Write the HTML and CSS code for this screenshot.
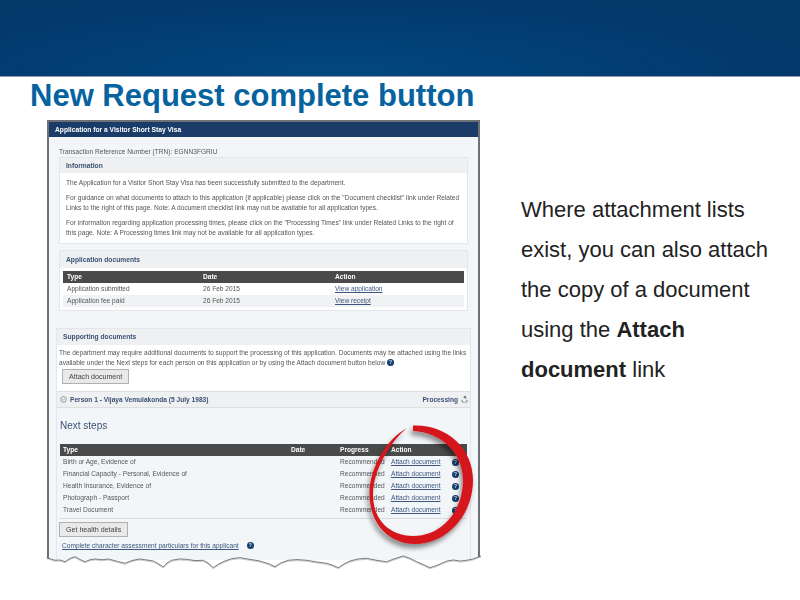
FILE: index.html
```html
<!DOCTYPE html>
<html lang="en">
<head>
<meta charset="utf-8">
<title>New Request complete button</title>
<link rel="stylesheet" href="styles.css">
</head>
<body>
<div class="slide">
  <header class="banner"></header>
  <h1 class="title">New Request complete button</h1>
  <div class="content">
    <div class="shot">
      <div class="panel">
        <div class="panel-title">Application for a Visitor Short Stay Visa</div>
        <div class="panel-body">
          <p class="trn">Transaction Reference Number (TRN): EGNN3FGRIU</p>
          <section class="box info">
            <h2 class="box-head">Information</h2>
            <div class="info-text">
              <p>The Application for a Visitor Short Stay Visa has been successfully submitted to the department.</p>
              <p>For guidance on what documents to attach to this application (if applicable) please click on the "Document checklist" link under Related<br>Links to the right of this page. Note: A document checklist link may not be available for all application types.</p>
              <p>For information regarding application processing times, please click on the "Processing Times" link under Related Links to the right of<br>this page. Note: A Processing times link may not be available for all application types.</p>
            </div>
          </section>
          <section class="box docs">
            <h2 class="box-head">Application documents</h2>
            <div class="table-wrap">
              <div class="row thead docs-row"><span>Type</span><span>Date</span><span>Action</span></div>
              <div class="row docs-row"><span>Application submitted</span><span>26 Feb 2015</span><a>View application</a></div>
              <div class="row alt docs-row"><span>Application fee paid</span><span>26 Feb 2015</span><a>View receipt</a></div>
            </div>
          </section>
        </div>
        <section class="support">
          <h2 class="box-head support-head">Supporting documents</h2>
          <div class="support-text">
            <p>The department may require additional documents to support the processing of this application. Documents may be attached using the links<br>available under the Next steps for each person on this application or by using the Attach document button below <i class="q">?</i></p>
            <span class="btn">Attach document</span>
          </div>
          <div class="person">
            <span class="person-name"><svg class="chev" viewBox="0 0 8 8"><circle cx="4" cy="4" r="3.3" fill="none" stroke="#777" stroke-width=".8"/><path d="M2.4 3.2 4 4.6 5.6 3.2" fill="none" stroke="#777" stroke-width=".8"/></svg>Person 1 - Vijaya Vemulakonda (5 July 1983)</span>
            <span class="person-state">Processing <svg class="proc" viewBox="0 0 8 8"><path d="M1.2 4.4a2.9 2.9 0 1 0 5.6 0M3.2 .6h2.2v2.6M5.4 1.8H3" fill="none" stroke="#555" stroke-width=".9"/></svg></span>
          </div>
          <div class="steps">
            <h3 class="steps-head">Next steps</h3>
            <div class="steps-table">
              <div class="row thead step-row"><span>Type</span><span>Date</span><span>Progress</span><span>Action</span><span></span></div>
              <div class="row step-row"><span>Birth or Age, Evidence of</span><span></span><span>Recommended</span><a>Attach document</a><i class="q">?</i></div>
              <div class="row step-row"><span>Financial Capacity - Personal, Evidence of</span><span></span><span>Recommended</span><a>Attach document</a><i class="q">?</i></div>
              <div class="row step-row"><span>Health Insurance, Evidence of</span><span></span><span>Recommended</span><a>Attach document</a><i class="q">?</i></div>
              <div class="row step-row"><span>Photograph - Passport</span><span></span><span>Recommended</span><a>Attach document</a><i class="q">?</i></div>
              <div class="row step-row"><span>Travel Document</span><span></span><span>Recommended</span><a>Attach document</a><i class="q">?</i></div>
            </div>
            <span class="btn health">Get health details</span>
            <p class="char"><a>Complete character assessment particulars for this applicant</a><i class="q">?</i></p>
          </div>
        </section>
      </div>
      <svg class="overlay" viewBox="33 120 460 460" aria-hidden="true">
        <defs>
          <filter id="ringShadow" x="-20%" y="-20%" width="140%" height="140%">
            <feDropShadow dx="-2" dy="4" stdDeviation="2.5" flood-color="#000" flood-opacity=".45"/>
          </filter>
          <filter id="tearShadow" x="-5%" y="-100%" width="110%" height="300%">
            <feDropShadow dx="0" dy="1" stdDeviation=".6" flood-color="#000" flood-opacity=".3"/>
          </filter>
        </defs>
        <path class="tear-fill" d="M46.700 557.700 L55 560.300 60 560 65 561.700 70 558.500 75 556.700 80 559.500 85 561.700 90 559.800 95 559 102 559.800 108.300 559 116 561 125 563.300 132 560.500 140 559 147 560 153.300 561 158 563.500 163.300 567 167 563 171.700 560.300 179 559 186.700 559.300 195 560.600 203.300 560.300 208 563 213.300 567.700 219 563.800 225 561 232 558.600 240 557.700 250 559.400 260 561 268 563.500 275 566.700 281 562.800 288.300 560.300 297 559.600 306.700 560.300 317 562 326.700 563.300 332 565 338.300 567.700 344 564 350 561 358 559 366.700 558.300 377 560.400 386.700 561.700 395 558.600 403.300 556 410 558.400 416.700 561.700 423 564.500 430 567.700 436 565.800 441.700 563.300 447 561 453.300 560 460 561 466.700 560.300 473 559 481 556 V580 H46.700 Z"/>
        <path class="tear" filter="url(#tearShadow)" d="M46.700 557.700 L55 560.300 60 560 65 561.700 70 558.500 75 556.700 80 559.500 85 561.700 90 559.800 95 559 102 559.800 108.300 559 116 561 125 563.300 132 560.500 140 559 147 560 153.300 561 158 563.500 163.300 567 167 563 171.700 560.300 179 559 186.700 559.300 195 560.600 203.300 560.300 208 563 213.300 567.700 219 563.800 225 561 232 558.600 240 557.700 250 559.400 260 561 268 563.500 275 566.700 281 562.800 288.300 560.300 297 559.600 306.700 560.300 317 562 326.700 563.300 332 565 338.300 567.700 344 564 350 561 358 559 366.700 558.300 377 560.400 386.700 561.700 395 558.600 403.300 556 410 558.400 416.700 561.700 423 564.500 430 567.700 436 565.800 441.700 563.300 447 561 453.300 560 460 561 466.700 560.300 473 559 481 556"/>
        <path class="ring" filter="url(#ringShadow)" d="M413 425.500 C445 424 473 447 473 480 C473 515 447 544 415 544 C390 544 370 525 369.500 495 C369 470 385 440 407 428 C390 442 373 470 373 495 C373 520 390 536 413 536 C443 536 463 510 463 480 C463 452 440 432 413 431 Z"/>
      </svg>
    </div>
    <div class="side">
      <p>Where attachment lists<br>exist, you can also attach<br>the copy of a document<br>using the <b>Attach</b><br><b>document</b> link</p>
    </div>
  </div>
</div>
</body>
</html>
```
FILE: styles.css
```css
* { box-sizing: border-box; margin: 0; padding: 0; }
html, body { width: 800px; height: 600px; overflow: hidden; background: #fff; }
body { font-family: "Liberation Sans", Arial, sans-serif; }

.slide { width: 800px; height: 600px; display: flex; flex-direction: column; }
.banner {
  height: 77px;
  flex: none;
  border-bottom: 1px solid #8d99aa;
  background: radial-gradient(ellipse 60% 110% at 42% 100%, #02487f 0%, #023e73 60%, #03386b 100%);
}
.title {
  height: 37px;
  flex: none;
  padding-left: 30px;
  font-size: 31px;
  line-height: 37px;
  font-weight: 700;
  color: #06639f;
}
.content { display: flex; flex: 1; min-height: 0; }

.shot { position: relative; width: 460px; margin: 6px 0 0 33px; flex: none; height: 460px; }
.overlay { position: absolute; left: 0; top: 0; width: 460px; height: 460px; filter: blur(.35px); }
.tear-fill { fill: #fff; }
.tear { fill: none; stroke: #444; stroke-width: .7; stroke-linejoin: round; }
.ring { fill: #d5141b; }

.panel {
  margin-left: 14px;
  width: 433px;
  height: 440px;
  border: 2px solid #6d7074;
  border-bottom: 0;
  background: #f3f6f9;
  font-size: 6.6px;
  line-height: 10px;
  color: #555;
  white-space: nowrap;
  filter: blur(.55px);
  overflow: hidden;
}
.panel-title {
  height: 15px;
  background: #1b3b69;
  color: #fff;
  font-weight: 700;
  font-size: 6.7px;
  line-height: 15px;
  padding-left: 6px;
}
.panel-body { padding: 10px 10px 0; }
.trn { height: 11px; line-height: 10px; font-size: 6.6px; }
.box { background: #fff; border: 1px solid #e4e6e9; }
.box-head {
  height: 15px;
  padding-left: 6px;
  background: #eff0f1;
  color: #3a5174;
  font-size: 6.7px;
  line-height: 15px;
  font-weight: 700;
}
.info { height: 87px; margin-top: -1px; }
.info-text { padding: 5px 6px; }
.info-text p { margin-bottom: 5px; }
.docs { height: 61px; margin: 6px 0 0; }
.docs .box-head { height: 17px; line-height: 17px; }
.table-wrap { padding: 3px 3px 0; }

.row { display: grid; height: 12px; line-height: 12px; align-items: center; }
.thead { background: #4a4a4a; color: #fff; font-weight: 700; }
.alt { background: #f0f2f4; }
.row a, .char a { color: #3c5680; text-decoration: underline; }
.docs-row { grid-template-columns: 136px 132px 1fr; padding-left: 4px; }

.support {
  margin: 17px 7px 0;
  border: 1px solid #e4e6e9;
  border-bottom: 0;
  height: 240px;
}
.support-head { height: 16px; line-height: 16px; }
.support-text { background: #fff; height: 46px; padding: 3px 2px 0; }
.support-text p { line-height: 9.5px; height: 19px; }
.q {
  display: inline-block;
  width: 7px;
  height: 7px;
  border-radius: 50%;
  background: #153f6f;
  color: #cfe0ee;
  font-size: 5px;
  line-height: 7px;
  font-style: normal;
  font-weight: 700;
  text-align: center;
  vertical-align: middle;
}
.btn {
  display: inline-block;
  margin: 2px 0 0 3px;
  height: 15px;
  padding: 0 6px;
  border: 1px solid #aeb0b2;
  background: #e9e9e9;
  font-size: 7.1px;
  line-height: 15px;
  color: #444;
}
.person {
  display: flex;
  justify-content: space-between;
  align-items: center;
  height: 17px;
  padding: 0 2px 0 3px;
  background: #eff0f1;
  border-top: 1px solid #dcdee0;
  border-bottom: 1px solid #dcdee0;
  color: #3a5174;
  font-weight: 700;
}
.person-name, .person-state { display: flex; align-items: center; gap: 3px; }
.chev { width: 7px; height: 7px; }
.proc { width: 7px; height: 7px; }
.steps { padding: 0 3px; }
.steps-head {
  height: 36px;
  padding-top: 12px;
  font-size: 10px;
  line-height: 12px;
  font-weight: 400;
  color: #3a5174;
}
.steps-table { border-bottom: 1px solid #d9dcdf; height: 75px; }
.step-row { grid-template-columns: 228px 49px 51px 61px 1fr; padding-left: 3px; }
.step-row .q { justify-self: start; }
.health { margin: 3px 0 0 -1px; }
.char { margin: 4px 0 0 2px; }
.char .q { margin-left: 8px; vertical-align: 1px; }

.side { margin-left: 28px; padding-top: 76px; font-size: 22px; line-height: 40px; color: #222; white-space: nowrap; }
.side b { font-weight: 700; }
```
